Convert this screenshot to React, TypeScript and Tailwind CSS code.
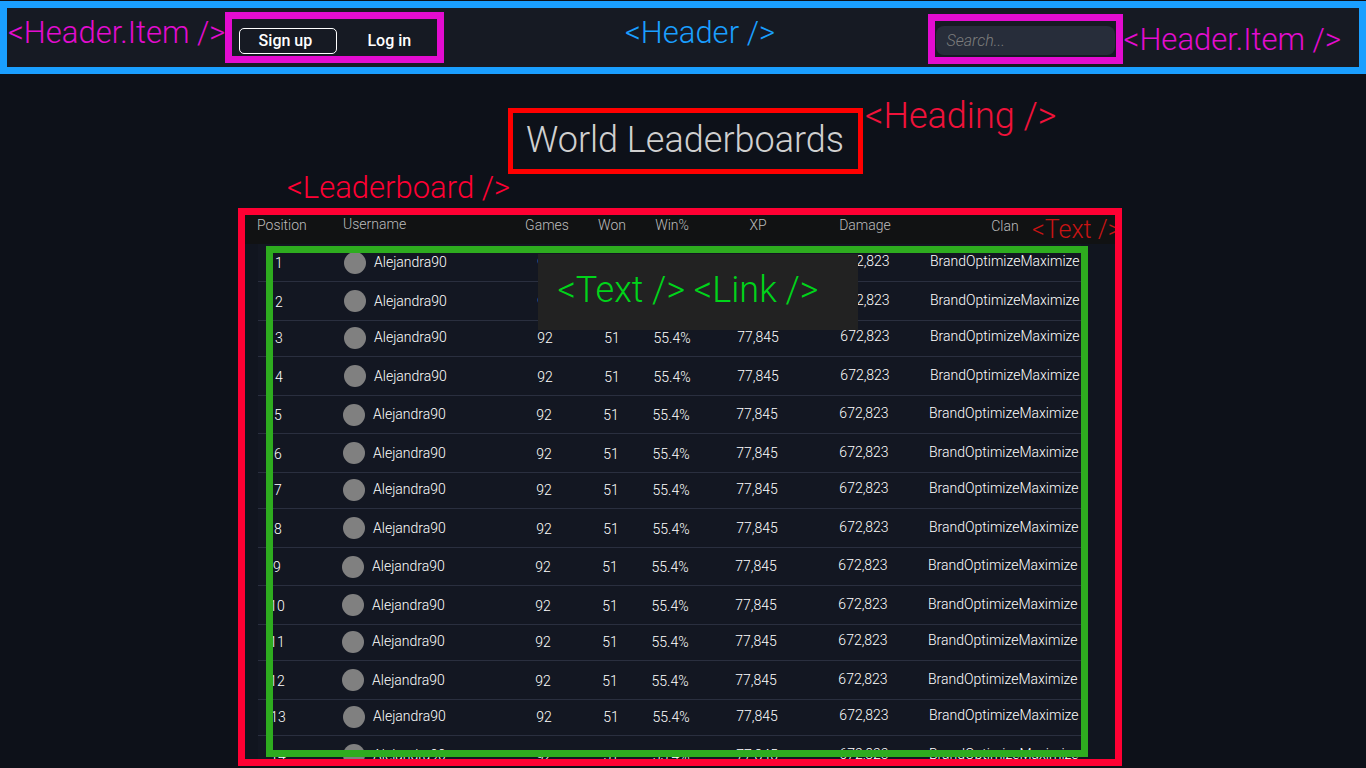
import React from 'react';

const rows = [
  { id: 1, height: 'h-[38px]', shift: 'ml-0' },
  { id: 2, height: 'h-[39px]', shift: 'ml-0' },
  { id: 3, height: 'h-[36px] pb-[2px]', shift: 'ml-0' },
  { id: 4, height: 'h-[39px]', shift: 'ml-0' },
  { id: 5, height: 'h-[38px]', shift: '-ml-px' },
  { id: 6, height: 'h-[39px]', shift: '-ml-px' },
  { id: 7, height: 'h-[36px] pb-[2px]', shift: '-ml-px' },
  { id: 8, height: 'h-[39px]', shift: '-ml-px' },
  { id: 9, height: 'h-[38px]', shift: '-ml-[2px]' },
  { id: 10, height: 'h-[39px]', shift: '-ml-[2px]' },
  { id: 11, height: 'h-[36px] pb-[2px]', shift: '-ml-[2px]' },
  { id: 12, height: 'h-[39px]', shift: '-ml-[2px]' },
  { id: 13, height: 'h-[36px] pb-[2px]', shift: '-ml-px' },
  { id: 14, height: 'h-[39px]', shift: '-ml-px' },
];

const Label: React.FC<{ className: string; children: React.ReactNode }> = ({ className, children }) => (
  <span className={`font-light leading-none whitespace-nowrap ${className}`}>{children}</span>
);

const App: React.FC = () => {
  return (
    <div className="h-[768px] overflow-hidden bg-[#0d1119] font-['Roboto',sans-serif] text-[14px] text-white">
      <header className="mt-px flex h-[73px] items-center justify-between border-[7px] border-[#1a9fff] bg-[#161a23] pl-px pr-[18px]">
        <div className="flex items-center">
          <Label className="-mt-[11px] text-[31px] text-[#e30cd0]">{'<Header.Item />'}</Label>
          <div className="flex h-[51px] w-[219px] items-center border-[7px] border-[#e30cd0] pl-[7px]">
            <button className="mt-[6px] h-[26px] w-[98px] rounded-[5px] border border-white pr-[6px] text-[16px] font-medium text-white">
              Sign up
            </button>
            <button className="ml-[30px] mt-[6px] text-[16px] font-medium text-white">Log in</button>
          </div>
        </div>
        <Label className="ml-[28px] -mt-[11px] text-[31px] text-[#1a9fff]">{'<Header />'}</Label>
        <div className="mt-[2px] flex items-center">
          <div className="mr-px flex h-[50px] w-[195px] items-center border-[7px] border-[#e30cd0] px-px">
            <div className="mt-[3px] flex h-[29px] w-full items-center rounded-[8px] bg-[#272d3a] pl-[11px] pt-px text-[16px] font-light italic text-[#7d7d7d]">
              Search...
            </div>
          </div>
          <Label className="mt-[2px] text-[31px] text-[#e30cd0]">{'<Header.Item />'}</Label>
        </div>
      </header>

      <div className="ml-[508px] mt-[34px] flex items-start">
        <h1 className="flex h-[66px] w-[355px] items-center justify-center border-[5px] border-[#ff0000] pb-[2px] pr-px text-[36px] font-light text-[#d0d0d0]">
          World Leaderboards
        </h1>
        <Label className="ml-[2px] -mt-[10px] text-[36px] text-[#f0123a]">{'<Heading />'}</Label>
      </div>

      <section className="relative ml-[238px] mt-[34px] h-[558px] w-[884px] overflow-hidden border-[7px] border-[#ff0033] bg-[#11151f]">
        <div className="relative flex h-[29px] items-center bg-[#111213] pb-[9px] text-[#bdbdbd]">
          <span className="ml-[12px] w-[86px] font-light">Position</span>
          <span className="-mt-[2px] w-[182px] font-light">Username</span>
          <span className="w-[44px] text-center font-light">Games</span>
          <span className="ml-[29px] w-[28px] text-center font-light">Won</span>
          <span className="ml-[29px] w-[34px] text-center font-light">Win%</span>
          <span className="ml-[60px] w-[18px] text-center font-light">XP</span>
          <span className="ml-[72px] w-[52px] text-center font-light">Damage</span>
          <span className="ml-[100px] mt-[2px] w-[28px] text-center font-light">Clan</span>
          <Label className="absolute left-[787px] top-[2px] text-[25px] text-[#c81414]">{'<Text />'}</Label>
        </div>

        <div className="ml-[13px] mr-[34px] bg-[#131722]">
          {rows.map(row => (
            <div key={row.id} className={`flex items-center border-b border-[#2a2f3f] ${row.height}`}>
              <div className={`flex items-center font-light ${row.shift}`}>
                <span className="-ml-[13px] mt-[2px] w-[68px] text-center">{row.id}</span>
                <span className="ml-[31px] h-[22px] w-[22px] rounded-full bg-[#808080]" />
                <span className="ml-[8px] w-[151px]">Alejandra90</span>
                <span className="mt-[2px] w-[40px] text-center">92</span>
                <span className="ml-[27px] mt-[2px] w-[40px] text-center">51</span>
                <span className="ml-[10px] mt-[2px] w-[60px] text-center">55.4%</span>
                <span className="ml-[26px] w-[60px] text-center">77,845</span>
                <span className="ml-[37px] mb-[2px] w-[80px] text-center">672,823</span>
                <span className="ml-[25px] mb-[2px] w-[150px] whitespace-nowrap">BrandOptimizeMaximize</span>
              </div>
            </div>
          ))}
        </div>

        <div className="absolute left-[21px] top-[31px] h-[511px] w-[822px] border-[7px] border-[#2eac1f]" />
        <div className="absolute left-[293px] top-[39px] flex h-[76px] w-[320px] items-center justify-center bg-[#222222] pb-[4px] pr-[20px]">
          <Label className="text-[36px] text-[#00d41a]">{'<Text /> <Link />'}</Label>
        </div>
      </section>

      <Label className="absolute left-[287px] top-[172px] text-[31px] text-[#ff0033]">{'<Leaderboard />'}</Label>
    </div>
  );
};

export default App;
